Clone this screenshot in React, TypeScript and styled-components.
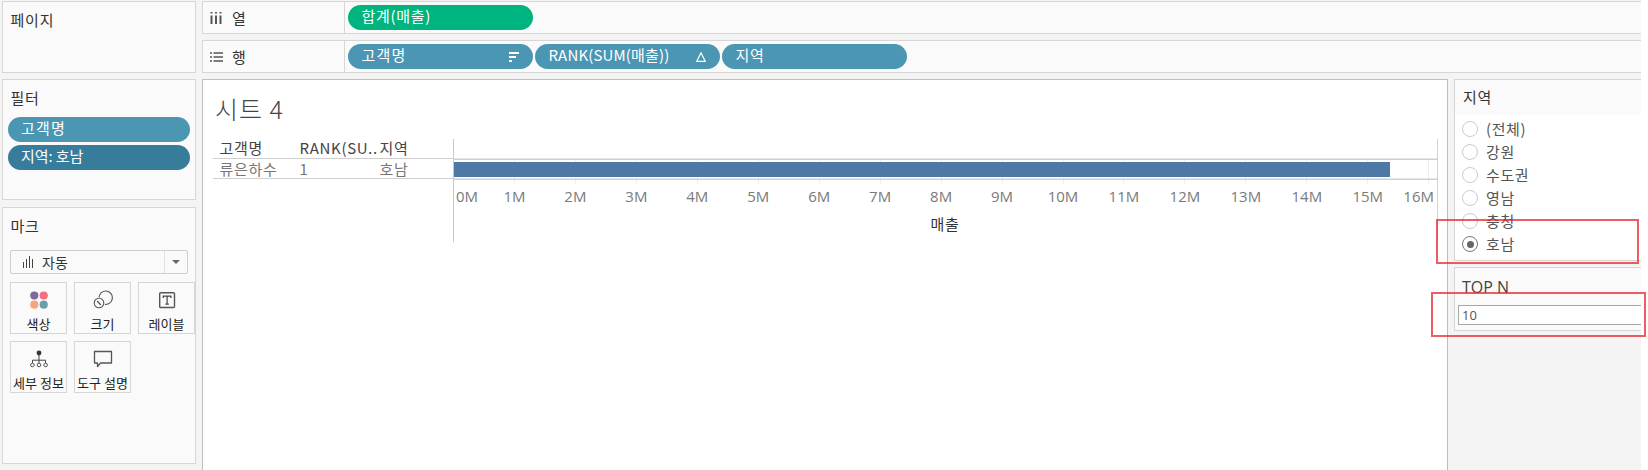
import React from "react";
import styled, { createGlobalStyle } from "styled-components";

const Global = createGlobalStyle`
  html, body { margin: 0; padding: 0; background: #fff; }
  body { font-family: "Open Sans", "Noto Sans CJK KR", sans-serif; }
`;
const KR = `"Noto Sans CJK KR", "Open Sans", sans-serif`;

const Page = styled.div`
  position: relative;
  width: 1648px;
  height: 470px;
  overflow: hidden;
  background: #fff;
`;
const Workspace = styled.div`
  width: 1641px;
  height: 470px;
  box-sizing: border-box;
  padding: 1px 0 0 2px;
  background: #f4f4f4;
  display: flex;
  gap: 6px;
`;
const Sidebar = styled.aside`
  width: 194px;
  flex: none;
  display: flex;
  flex-direction: column;
`;
const Panel = styled.section<{ $h: number; $mt?: number }>`
  box-sizing: border-box;
  height: ${(p) => p.$h}px;
  margin-top: ${(p) => p.$mt ?? 0}px;
  background: #fafafa;
  border: 1.5px solid #d6d6d6;
  padding: 0 6px;
`;
const PanelTitle = styled.div<{ $top: number }>`
  font: 400 15px/20px ${KR};
  color: #333;
  letter-spacing: 0.8px;
  padding: ${(p) => p.$top}px 0 0 1.5px;
`;
const FilterList = styled.div`
  margin: 9px 0 0 -1.5px;
  width: 182px;
  display: flex;
  flex-direction: column;
  gap: 3px;
`;
const Pill = styled.div<{ $bg: string; $w?: number; $ls?: number }>`
  box-sizing: border-box;
  height: 25px;
  width: ${(p) => (p.$w ? `${p.$w}px` : "auto")};
  flex: none;
  border-radius: 12.5px;
  background: ${(p) => p.$bg};
  color: #fff;
  font: 400 15px/22px ${KR};
  letter-spacing: ${(p) => p.$ls ?? 0.7}px;
  padding: 0 14px 0 13.5px;
  display: flex;
  justify-content: space-between;
  align-items: flex-start;
  white-space: nowrap;
`;
const PillIcon = styled.svg`
  width: 10px;
  height: 10px;
  margin-top: 8px;
  flex: none;
`;
const MarkSelect = styled.div`
  margin: 14px 0 0 1px;
  width: 178px;
  height: 24px;
  box-sizing: border-box;
  border: 1px solid #cfcfcf;
  border-radius: 2px;
  background: #fafafa;
  display: flex;
  align-items: center;
`;
const SelectMain = styled.div`
  flex: 1;
  height: 100%;
  display: flex;
  align-items: center;
  gap: 8px;
  padding-left: 12px;
  font: 400 14px/20px ${KR};
  color: #333;
  border-right: 1px solid #e2e2e2;
`;
const Caret = styled.div`
  width: 22px;
  display: flex;
  justify-content: center;
  &::after {
    content: "";
    border-left: 4px solid transparent;
    border-right: 4px solid transparent;
    border-top: 4px solid #666;
  }
`;
const CardGrid = styled.div`
  margin: 8px 0 0 1px;
  display: grid;
  grid-template-columns: repeat(3, 57px);
  grid-auto-rows: 52px;
  gap: 7px 7px;
`;
const Card = styled.div`
  box-sizing: border-box;
  border: 1px solid #d6d6d6;
  display: flex;
  flex-direction: column;
  align-items: center;
  padding-top: 7px;
  color: #222;
  font: 400 13px/17px ${KR};
  white-space: nowrap;
  svg { width: 20px; height: 20px; flex: none; margin-bottom: 5px; }
`;
const Main = styled.main`
  flex: 1;
  min-width: 0;
  display: flex;
  flex-direction: column;
`;
const Shelf = styled.div<{ $mt?: number }>`
  box-sizing: border-box;
  height: 33px;
  margin-top: ${(p) => p.$mt ?? 0}px;
  background: #fafafa;
  border-top: 1.5px solid #d6d6d6;
  border-bottom: 1.5px solid #d6d6d6;
  border-left: 1.5px solid #d6d6d6;
  display: flex;
`;
const ShelfLabel = styled.div`
  width: 142px;
  flex: none;
  box-sizing: border-box;
  border-right: 1.5px solid #d6d6d6;
  display: flex;
  align-items: center;
  gap: 9px;
  padding-left: 7px;
  font: 400 15px/20px ${KR};
  color: #333;
  svg { width: 13px; height: 12px; flex: none; }
`;
const ShelfPills = styled.div`
  display: flex;
  gap: 2px;
  padding: 3px 0 0 3px;
`;
const Body = styled.div`
  flex: 1;
  min-height: 0;
  margin-top: 6px;
  display: flex;
  gap: 6px;
`;
const Canvas = styled.div`
  width: 1246px;
  box-sizing: border-box;
  flex: none;
  background: #fff;
  border-left: 1px solid #bdbdbd;
  border-right: 1.5px solid #bdbdbd;
  border-top: 1.5px solid #bdbdbd;
  padding: 0 0 0 10px;
`;
const SheetTitle = styled.h1`
  margin: 0;
  height: 59px;
  padding: 11px 0 0 2px;
  box-sizing: border-box;
  font: 300 25px/34px ${KR};
  color: #444;
  letter-spacing: 1px;
`;
const Viz = styled.div`
  display: flex;
  width: 1225px;
`;
const RowTable = styled.div`
  width: 240px;
  flex: none;
  display: grid;
  grid-template-columns: 80px 80px 80px;
  grid-auto-rows: 20px;
  align-content: start;
`;
const Cell = styled.div<{ $head?: boolean }>`
  box-sizing: border-box;
  height: 20px;
  border-bottom: 1.5px solid #cfcfcf;
  padding-left: 6.5px;
  font: 400 15px/${(p) => (p.$head ? 18 : 19)}px ${KR};
  letter-spacing: 0.7px;
  color: ${(p) => (p.$head ? "#444" : "#777")};
  white-space: nowrap;
`;
const ChartSvg = styled.svg`
  width: 985px;
  height: 104px;
  flex: none;
  display: block;
  text {
    font-family: "Open Sans", sans-serif;
    font-size: 15px;
    fill: #7a7a7a;
  }
  .title {
    font-family: ${KR};
    fill: #333;
    letter-spacing: 0.7px;
  }
`;
const Side = styled.aside`
  flex: 1;
  display: flex;
  flex-direction: column;
  gap: 6px;
`;
const ControlPanel = styled.section<{ $h: number }>`
  box-sizing: border-box;
  height: ${(p) => p.$h}px;
  border: 1.5px solid #d6d6d6;
  border-right: none;
  background: #fafafa;
  position: relative;
`;
const ControlTitle = styled.div`
  height: 35px;
  box-sizing: border-box;
  padding: 5px 0 0 8px;
  font: 400 15px/24px ${KR};
  letter-spacing: 0.8px;
  color: #333;
`;
const RadioList = styled.div`
  background: #fff;
  height: 145px;
  padding: 2.5px 0 0 7px;
  box-sizing: border-box;
`;
const RadioRow = styled.div`
  height: 23px;
  display: flex;
  align-items: center;
  gap: 8px;
  font: 400 15px/20px ${KR};
  letter-spacing: 0.6px;
  color: #555;
`;
const Radio = styled.span<{ $on?: boolean }>`
  width: 16px;
  height: 16px;
  box-sizing: border-box;
  border-radius: 50%;
  flex: none;
  background: #fff;
  border: 1px solid ${(p) => (p.$on ? "#777" : "#ccc")};
  display: flex;
  align-items: center;
  justify-content: center;
  &::after {
    content: "";
    display: ${(p) => (p.$on ? "block" : "none")};
    width: 7px;
    height: 7px;
    border-radius: 50%;
    background: #666;
  }
`;
const ParamTitle = styled.div`
  height: 37px;
  box-sizing: border-box;
  padding: 8px 0 0 7px;
  font: 400 16px/22px "Open Sans", sans-serif;
  color: #444;
`;
const ParamInput = styled.div`
  margin-left: 3px;
  height: 20px;
  box-sizing: border-box;
  border: 1px solid #a8a8a8;
  border-right: none;
  background: #fff;
  padding-left: 3px;
  font: 400 13px/18px "Open Sans", sans-serif;
  color: #555;
`;
const Highlight = styled.div<{ $l: number; $t: number; $w: number; $h: number }>`
  position: absolute;
  left: ${(p) => p.$l}px;
  top: ${(p) => p.$t}px;
  width: ${(p) => p.$w}px;
  height: ${(p) => p.$h}px;
  box-sizing: border-box;
  border: 2px solid rgba(232, 30, 36, 0.72);
`;

const ColsIcon = () => (
  <svg viewBox="0 0 13 12">
    <path d="M1.5 0v1.6M1.5 3.5V12M6 0v1.6M6 3.5V12M10.5 0v1.6M10.5 3.5V12" stroke="#555" strokeWidth="2" fill="none" />
  </svg>
);
const RowsIcon = () => (
  <svg viewBox="0 0 13 12">
    <path d="M0 2h2M3.5 2H13M0 6h2M3.5 6H13M0 10h2M3.5 10H13" stroke="#555" strokeWidth="1.7" fill="none" />
  </svg>
);
const SortIcon = () => (
  <PillIcon viewBox="0 0 10 10">
    <path d="M0 1h10M0 5h7M0 9h3" stroke="#fff" strokeWidth="1.9" fill="none" />
  </PillIcon>
);
const DeltaIcon = () => (
  <PillIcon viewBox="0 0 10 10">
    <path d="M5 .8 9.2 9.3H.8Z" stroke="#fff" strokeWidth="1.2" fill="none" />
  </PillIcon>
);
const BarsIcon = () => (
  <svg width="11" height="12" viewBox="0 0 11 12" style={{ flex: "none" }}>
    <path d="M.5 6v6M3.5 3v9M6.5 0v12M9.5 3v9" stroke="#444" strokeWidth="1" fill="none" />
  </svg>
);
const ColorIcon = () => (
  <svg viewBox="0 0 20 20">
    <circle cx="5.3" cy="5.5" r="4.1" fill="#7d6a9b" />
    <circle cx="14.7" cy="5.5" r="4.1" fill="#f96d82" />
    <circle cx="5.3" cy="14.7" r="4.1" fill="#f3a67f" />
    <circle cx="14.7" cy="14.7" r="4.1" fill="#6c9dab" />
  </svg>
);
const SizeIcon = () => (
  <svg viewBox="0 0 20 20">
    <path d="M6 7.2A6.7 6.7 0 1 1 12 14.4" stroke="#555" strokeWidth="1.1" fill="none" />
    <circle cx="6" cy="13" r="4.8" stroke="#555" strokeWidth="1.1" fill="none" />
    <path d="M4.2 11 7.8 15" stroke="#555" strokeWidth="1.2" />
  </svg>
);
const TextIcon = () => (
  <svg viewBox="0 0 20 20">
    <rect x="2.7" y="2.7" width="14.8" height="14.8" rx="1" stroke="#555" strokeWidth="1.4" fill="none" />
    <path d="M6.3 8V6.2h7.6V8M10.1 6.2v8M8.4 14.2h3.4" stroke="#444" strokeWidth="1.2" fill="none" />
  </svg>
);
const DetailIcon = () => (
  <svg viewBox="0 0 20 20">
    <circle cx="10" cy="4" r="2.4" fill="#333" />
    <path d="M10 5v6M3.5 14v-2.8h13V14M10 11v3" stroke="#444" strokeWidth="1" fill="none" />
    <circle cx="3.4" cy="16" r="1.8" fill="none" stroke="#555" strokeWidth="1" />
    <circle cx="10" cy="16" r="1.8" fill="none" stroke="#555" strokeWidth="1" />
    <circle cx="16.6" cy="16" r="1.8" fill="none" stroke="#555" strokeWidth="1" />
  </svg>
);
const TipIcon = () => (
  <svg viewBox="0 0 20 20">
    <path d="M1.5 2.5H18.5V14H7.5L4.5 17.5V14H1.5Z" stroke="#555" strokeWidth="1.3" fill="none" strokeLinejoin="round" />
  </svg>
);

const ticks = Array.from({ length: 17 }, (_, i) => i);
const TICK = 60.95;

const tickAnchor = (t: number) => (t === 0 ? "start" : t === 16 ? "end" : "middle");
const tickX = (t: number) => (t === 0 ? 3 : t === 16 ? 981 : 0.5 + t * TICK);

const Chart = () => (
  <ChartSvg viewBox="0 0 985 104">
    <path d="M.5 0V103" stroke="#c8c8c8" fill="none" />
    <path d="M984.5 0V103" stroke="#d4d4d4" fill="none" />
    {ticks.slice(1).map((t) => (
      <path key={t} d={`M${0.5 + Math.round(t * TICK)} 20V45`} stroke="#efefef" fill="none" />
    ))}
    <rect x="1" y="23" width="936" height="15" fill="#4e79a7" />
    <path d="M0 20.2H985M0 40.2H985" stroke="#cfcfcf" strokeWidth="1.4" fill="none" />
    {ticks.map((t) => (
      <text key={t} x={tickX(t)} y="63" textAnchor={tickAnchor(t)}>
        {t}M
      </text>
    ))}
    <text className="title" x="492" y="91" textAnchor="middle">매출</text>
  </ChartSvg>
);

const marks: [string, React.ReactNode][] = [
  ["색상", <ColorIcon key="c" />],
  ["크기", <SizeIcon key="s" />],
  ["레이블", <TextIcon key="t" />],
  ["세부 정보", <DetailIcon key="d" />],
  ["도구 설명", <TipIcon key="p" />],
];
const regions: [string, boolean][] = [
  ["(전체)", false],
  ["강원", false],
  ["수도권", false],
  ["영남", false],
  ["충청", false],
  ["호남", true],
];

export default function App() {
  return (
    <Page>
      <Global />
      <Workspace>
        <Sidebar>
          <Panel $h={72}>
            <PanelTitle $top={8}>페이지</PanelTitle>
          </Panel>
          <Panel $h={121} $mt={6}>
            <PanelTitle $top={8}>필터</PanelTitle>
            <FilterList>
              <Pill $bg="#4b96b3" $ls={1.2}>고객명</Pill>
              <Pill $bg="#387c9b" $ls={-0.1}>지역: 호남</Pill>
            </FilterList>
          </Panel>
          <Panel $h={257} $mt={7}>
            <PanelTitle $top={8}>마크</PanelTitle>
            <MarkSelect>
              <SelectMain>
                <BarsIcon />
                자동
              </SelectMain>
              <Caret />
            </MarkSelect>
            <CardGrid>
              {marks.map(([label, icon]) => (
                <Card key={label}>
                  {icon}
                  {label}
                </Card>
              ))}
            </CardGrid>
          </Panel>
        </Sidebar>
        <Main>
          <Shelf>
            <ShelfLabel>
              <ColsIcon />열
            </ShelfLabel>
            <ShelfPills>
              <Pill $bg="#00b47f" $w={185}>합계(매출)</Pill>
            </ShelfPills>
          </Shelf>
          <Shelf $mt={6}>
            <ShelfLabel>
              <RowsIcon />행
            </ShelfLabel>
            <ShelfPills>
              <Pill $bg="#4b96b3" $w={185} $ls={1.2}>
                고객명
                <SortIcon />
              </Pill>
              <Pill $bg="#4b96b3" $w={185} $ls={0.15}>
                RANK(SUM(매출))
                <DeltaIcon />
              </Pill>
              <Pill $bg="#4b96b3" $w={185}>지역</Pill>
            </ShelfPills>
          </Shelf>
          <Body>
            <Canvas>
              <SheetTitle>시트 4</SheetTitle>
              <Viz>
                <RowTable>
                  <Cell $head>고객명</Cell>
                  <Cell $head>RANK(SU..</Cell>
                  <Cell $head>지역</Cell>
                  <Cell>류은하수</Cell>
                  <Cell>1</Cell>
                  <Cell>호남</Cell>
                </RowTable>
                <Chart />
              </Viz>
            </Canvas>
            <Side>
              <ControlPanel $h={182}>
                <ControlTitle>지역</ControlTitle>
                <RadioList>
                  {regions.map(([name, on]) => (
                    <RadioRow key={name}>
                      <Radio $on={on} />
                      {name}
                    </RadioRow>
                  ))}
                </RadioList>
              </ControlPanel>
              <ControlPanel $h={64}>
                <ParamTitle>TOP N</ParamTitle>
                <ParamInput>10</ParamInput>
              </ControlPanel>
            </Side>
          </Body>
        </Main>
      </Workspace>
      <Highlight $l={1436} $t={219} $w={203} $h={45} />
      <Highlight $l={1431} $t={292} $w={215} $h={45} />
    </Page>
  );
}
